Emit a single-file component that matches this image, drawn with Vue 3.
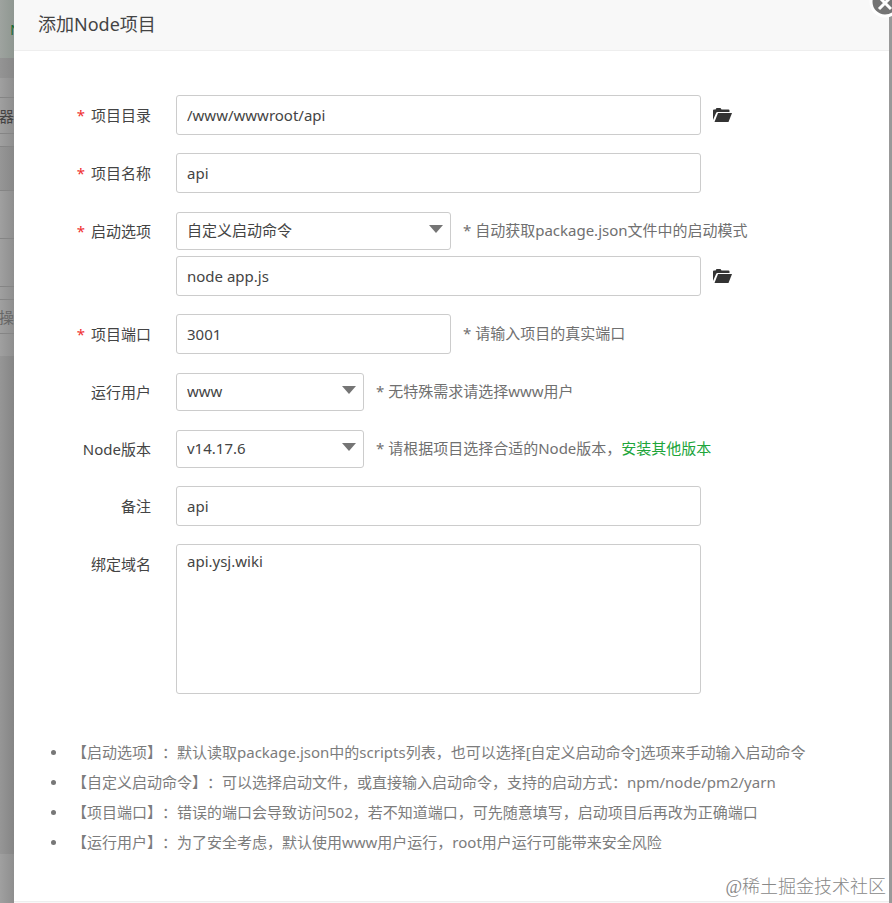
<template>
  <div class="page">
    <aside class="backdrop" aria-hidden="true">
      <div class="backdrop__block backdrop__block--notice"><span class="backdrop__brand">N</span></div>
      <div class="backdrop__block backdrop__block--gap"></div>
      <div class="backdrop__block backdrop__block--space"></div>
      <div class="backdrop__block backdrop__block--tab"><span>器</span></div>
      <div class="backdrop__block backdrop__block--line"></div>
      <div class="backdrop__block backdrop__block--head"></div>
      <div class="backdrop__block backdrop__block--row"></div>
      <div class="backdrop__block backdrop__block--row"></div>
      <div class="backdrop__block backdrop__block--line"></div>
      <div class="backdrop__block backdrop__block--batch"><span>操</span></div>
      <div class="backdrop__block backdrop__block--foot"></div>
      <div class="backdrop__block backdrop__block--empty"></div>
    </aside>

    <main class="dialog" role="dialog" aria-labelledby="dialog-title">
      <header class="dialog__header">
        <h1 id="dialog-title" class="dialog__title">添加Node项目</h1>
        <button type="button" class="dialog__close" aria-label="关闭">
          <svg viewBox="0 0 32 32" width="32" height="32">
            <circle cx="16" cy="16" r="14" fill="#757575" stroke="#fff" stroke-width="3" />
            <path d="M10 11l12 12M22 11L10 23" stroke="#fff" stroke-width="3" />
          </svg>
        </button>
      </header>

      <form class="form" @submit.prevent>
        <div v-for="row in rows" :key="row.id" class="form__row">
          <label class="form__label" :for="row.id">
            <span v-if="row.required" class="form__required">*</span>{{ row.label }}
          </label>
          <div class="form__content">
            <div v-for="field in row.fields" :key="field.id" class="form__line">
              <div v-if="field.type === 'select'" class="select" :class="`form__control--${field.size}`">
                <select :id="field.id" v-model="form[field.id]" class="control select__input">
                  <option v-for="option in field.options" :key="option">{{ option }}</option>
                </select>
                <svg class="select__arrow" viewBox="0 0 14 8" width="14" height="8">
                  <path d="M0 0h14L7 8z" fill="#757575" />
                </svg>
              </div>
              <textarea
                v-else-if="field.type === 'textarea'"
                :id="field.id"
                v-model="form[field.id]"
                class="control control--textarea form__control--large"
              ></textarea>
              <input
                v-else
                :id="field.id"
                v-model="form[field.id]"
                type="text"
                class="control"
                :class="`form__control--${field.size}`"
                :aria-label="field.title"
              />
              <button v-if="field.folder" type="button" class="form__folder" aria-label="选择文件">
                <svg viewBox="0 0 20 16" width="20" height="16">
                  <path d="M0 13V3.500Q0 2.500 1 2.500h1.500L3.500 1h4l1 1.500h7q1 0 1 1V5H4.500q-1 0-1.400 1z" fill="#333" />
                  <path d="M5 6H19L15.500 15H1.500z" fill="#333" />
                </svg>
              </button>
              <p v-if="field.help" class="form__help">
                * {{ field.help }}<a v-if="field.link" href="#" class="form__link">{{ field.link }}</a>
              </p>
            </div>
          </div>
        </div>
      </form>

      <ul class="tips">
        <li v-for="tip in tips" :key="tip" class="tips__item">{{ tip }}</li>
      </ul>

      <footer class="dialog__footer"></footer>
      <span class="watermark">@稀土掘金技术社区</span>
    </main>
  </div>
</template>

<script setup>
import { reactive } from 'vue'

const form = reactive({
  path: '/www/wwwroot/api',
  name: 'api',
  mode: '自定义启动命令',
  command: 'node app.js',
  port: '3001',
  user: 'www',
  version: 'v14.17.6',
  remark: 'api',
  domains: 'api.ysj.wiki',
})

const rows = [
  { id: 'path', label: '项目目录', required: true, fields: [{ id: 'path', size: 'large', folder: true }] },
  { id: 'name', label: '项目名称', required: true, fields: [{ id: 'name', size: 'large' }] },
  {
    id: 'mode',
    label: '启动选项',
    required: true,
    fields: [
      {
        id: 'mode',
        type: 'select',
        size: 'medium',
        options: ['自定义启动命令'],
        help: '自动获取package.json文件中的启动模式',
      },
      { id: 'command', size: 'large', folder: true, title: '启动命令' },
    ],
  },
  {
    id: 'port',
    label: '项目端口',
    required: true,
    fields: [{ id: 'port', size: 'medium', help: '请输入项目的真实端口' }],
  },
  {
    id: 'user',
    label: '运行用户',
    fields: [{ id: 'user', type: 'select', size: 'small', options: ['www', 'root'], help: '无特殊需求请选择www用户' }],
  },
  {
    id: 'version',
    label: 'Node版本',
    fields: [
      {
        id: 'version',
        type: 'select',
        size: 'small',
        options: ['v14.17.6'],
        help: '请根据项目选择合适的Node版本，',
        link: '安装其他版本',
      },
    ],
  },
  { id: 'remark', label: '备注', fields: [{ id: 'remark', size: 'large' }] },
  { id: 'domains', label: '绑定域名', fields: [{ id: 'domains', type: 'textarea' }] },
]

const tips = [
  '【启动选项】：默认读取package.json中的scripts列表，也可以选择[自定义启动命令]选项来手动输入启动命令',
  '【自定义启动命令】：可以选择启动文件，或直接输入启动命令，支持的启动方式：npm/node/pm2/yarn',
  '【项目端口】：错误的端口会导致访问502，若不知道端口，可先随意填写，启动项目后再改为正确端口',
  '【运行用户】：为了安全考虑，默认使用www用户运行，root用户运行可能带来安全风险',
]
</script>

<style>
body {
  margin: 0;
  background: #999;
}
</style>

<style scoped>
.page {
  display: grid;
  grid-template-columns: 14px minmax(0, 1fr) 3px;
  min-height: 100vh;
  overflow: hidden;
  font-family: 'Noto Sans', 'Noto Sans CJK SC', sans-serif;
  font-size: 15px;
  color: #444;
  text-spacing-trim: space-all;
}

.backdrop {
  display: flex;
  flex-direction: column;
  overflow: hidden;
  background: linear-gradient(90deg, #a0a0a0, #8e8e8e);
  color: #444;
}

.backdrop__block {
  box-sizing: border-box;
  display: flex;
  align-items: center;
  justify-content: flex-end;
  flex: none;
  border-bottom: 1px solid #858585;
}

.backdrop__block--notice {
  height: 58px;
  border-bottom: none;
  background: linear-gradient(90deg, #9ea39f, #8f9791);
}

.backdrop__brand {
  width: 4px;
  color: #1d6b35;
}

.backdrop__block--gap {
  height: 20px;
  border-bottom: none;
  background: linear-gradient(90deg, #949494, #888);
}

.backdrop__block--space {
  height: 20px;
}

.backdrop__block--tab {
  height: 36px;
}

.backdrop__block--line {
  height: 13px;
}

.backdrop__block--head {
  height: 44px;
  background: linear-gradient(90deg, #969696, #888);
}

.backdrop__block--row {
  height: 48px;
}

.backdrop__block--batch {
  height: 34px;
  color: #666;
}

.backdrop__block--foot {
  height: 22px;
  border-bottom: none;
}

.backdrop__block--empty {
  height: 498px;
  border-bottom: none;
  background: linear-gradient(90deg, #969696, #858585);
}

.dialog {
  position: relative;
  display: flex;
  flex-direction: column;
  background: #fff;
}

.dialog__header {
  box-sizing: border-box;
  height: 51px;
  padding: 0 24px;
  border-bottom: 1px solid #eee;
  background: #f8f8f8;
}

.dialog__title {
  margin: 0;
  font-size: 18px;
  font-weight: 400;
  line-height: 48px;
}

.dialog__close {
  position: absolute;
  top: -14px;
  right: -12px;
  width: 32px;
  height: 32px;
  padding: 0;
  border: none;
  background: transparent;
  cursor: pointer;
}

.form {
  display: flex;
  flex-direction: column;
  gap: 18px;
  padding: 44px 24px 43px 0;
}

.form__row {
  display: flex;
  gap: 25px;
}

.form__label {
  flex: none;
  width: 137px;
  margin-bottom: -2px;
  line-height: 41px;
  text-align: right;
}

.form__required {
  margin-right: 6px;
  color: #ef3030;
}

.form__content {
  display: flex;
  flex: 1;
  flex-direction: column;
  gap: 6px;
  min-width: 0;
}

.form__line {
  display: flex;
  align-items: center;
  gap: 12px;
}

.control {
  box-sizing: border-box;
  width: 100%;
  height: 40px;
  padding: 0 10px;
  border: 1px solid #ccc;
  border-radius: 3px;
  outline: none;
  background: #fff;
  color: #444;
  font-family: inherit;
  font-size: 15px;
}

.control:focus {
  border-color: #20a53a;
}

.control--textarea {
  display: block;
  height: 150px;
  padding: 5px 10px;
  line-height: 22px;
  resize: none;
}

.form__control--large {
  max-width: 525px;
}

.form__control--medium {
  max-width: 275px;
}

.form__control--small {
  max-width: 188px;
}

.select {
  position: relative;
  width: 100%;
  padding-top: 1px;
}

.select__input {
  display: block;
  height: 38px;
  padding-bottom: 2px;
  appearance: none;
}

.select__arrow {
  position: absolute;
  top: 14px;
  right: 8px;
  pointer-events: none;
}

.form__folder {
  display: flex;
  flex: none;
  padding: 0;
  border: none;
  background: transparent;
  cursor: pointer;
}

.form__help {
  flex: none;
  margin: 0;
  padding-bottom: 2px;
  line-height: 36px;
  color: #707070;
}

.form__link {
  color: #20a53a;
  text-decoration: none;
}

.tips {
  margin: 0;
  padding: 0 24px 0 37px;
  color: #7c7c7c;
  line-height: 30px;
  list-style: none;
}

.tips__item {
  display: flex;
  align-items: center;
  gap: 16px;
}

.tips__item::before {
  content: '';
  flex: none;
  width: 5px;
  height: 5px;
  border-radius: 50%;
  background: #777;
}

.dialog__footer {
  min-height: 1px;
  margin-top: auto;
  border-top: 1px solid #eee;
  background: #f8f8f8;
}

.watermark {
  position: absolute;
  right: 3px;
  bottom: 3px;
  color: #888;
  font-family: 'Liberation Serif', 'Noto Sans CJK SC', serif;
  font-size: 18px;
  font-weight: 300;
  line-height: 26px;
}
</style>
